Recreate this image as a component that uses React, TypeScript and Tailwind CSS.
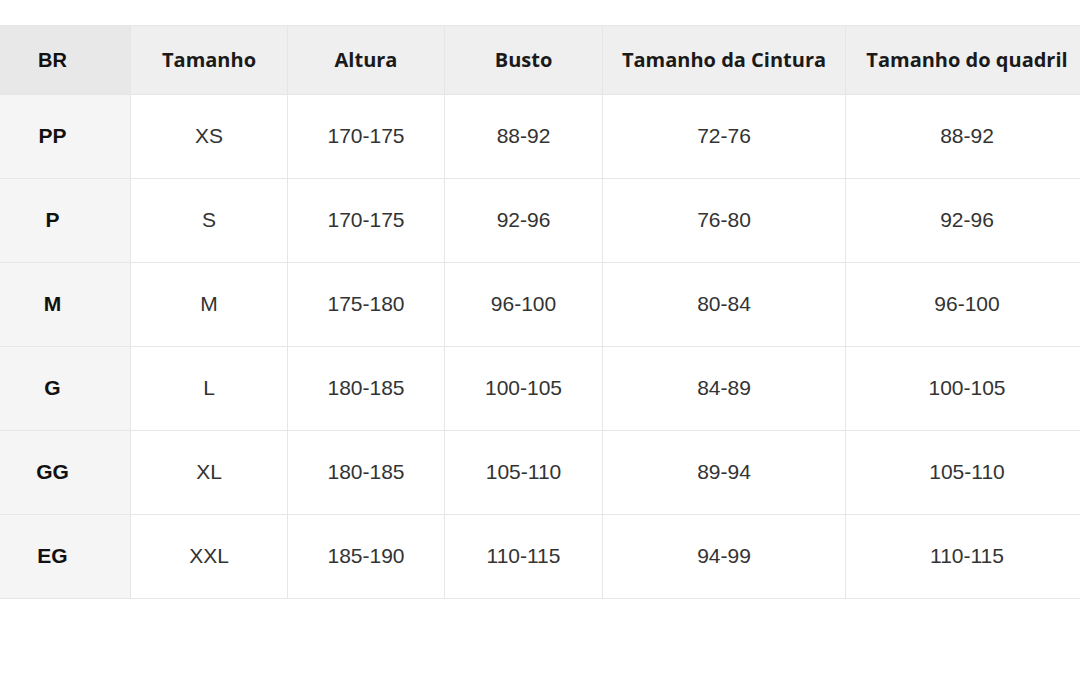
import React from "react";

const headers = ["BR", "Tamanho", "Altura", "Busto", "Tamanho da Cintura", "Tamanho do quadril"];
const rows = [
  ["PP", "XS", "170-175", "88-92", "72-76", "88-92"],
  ["P", "S", "170-175", "92-96", "76-80", "92-96"],
  ["M", "M", "175-180", "96-100", "80-84", "96-100"],
  ["G", "L", "180-185", "100-105", "84-89", "100-105"],
  ["GG", "XL", "180-185", "105-110", "89-94", "105-110"],
  ["EG", "XXL", "185-190", "110-115", "94-99", "110-115"],
];

export default function App() {
  return (
    <div className="w-[1080px] h-[680px] overflow-hidden bg-white pt-[25px]">
      <div className="w-[1088px] grid grid-cols-[131px_157px_157px_158px_243px_242px] border-t border-[#e6e6e6]">
        {headers.map((h, i) => (
          <div
            key={h}
            className={
              "h-[69px] flex items-center justify-center border-b border-[#e6e6e6] " +
              (i < 5 ? "border-r " : "") +
              (i === 0
                ? "pr-[25px] bg-[#e8e8e8] font-['Liberation_Sans',Arial,sans-serif] font-bold text-[20px] text-[#111]"
                : "bg-[#efefef] font-['Open_Sans',sans-serif] font-bold text-[20px] text-[#1a1a1a]")
            }
          >
            {h}
          </div>
        ))}
        {rows.map((r) =>
          r.map((c, i) => (
            <div
              key={r[0] + i}
              className={
                "h-[84px] pb-[2px] flex items-center justify-center border-b border-[#e6e6e6] font-['Liberation_Sans',Arial,sans-serif] text-[21px] " +
                (i < 5 ? "border-r " : "") +
                (i === 0 ? "pr-[25px] bg-[#f5f5f5] font-bold text-[#111]" : "bg-white text-[#333]")
              }
            >
              {c}
            </div>
          ))
        )}
      </div>
    </div>
  );
}
